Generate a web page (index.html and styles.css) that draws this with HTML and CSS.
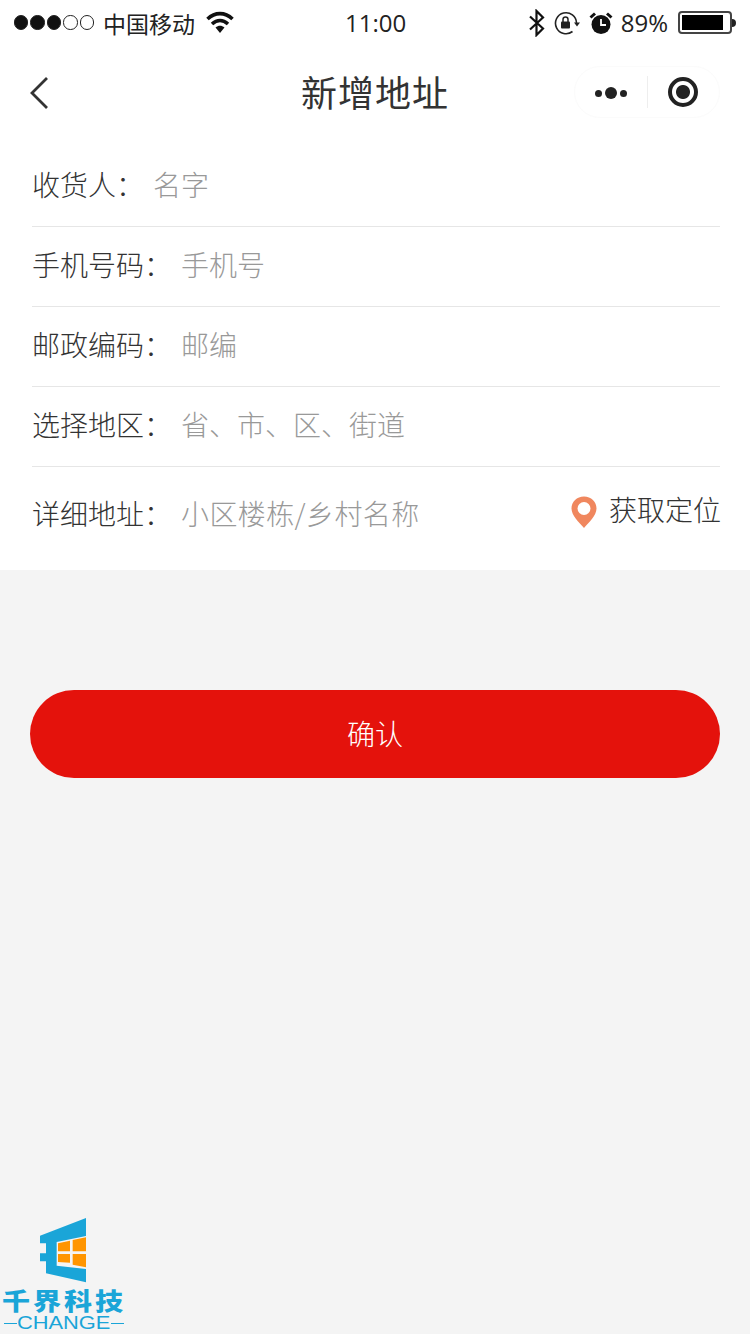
FILE: index.html
```html
<!DOCTYPE html>
<html lang="zh-CN">
<head>
    <meta charset="UTF-8">
    <meta name="viewport" content="width=device-width, initial-scale=1.0">
    <title>新增地址</title>
    <link rel="stylesheet" href="styles.css">
</head>
<body>

<div class="page">
    <div class="status-bar">
        <div class="status-left">
            <div class="signal">
                <span class="dot on"></span><span class="dot on"></span><span class="dot on"></span><span class="dot"></span><span class="dot"></span>
            </div>
            <span class="carrier">中国移动</span>
            <svg class="wifi" width="28" height="24" viewBox="0 0 28 24">
                <path d="M1.500 8C9 0.800 19 0.800 26.500 8" fill="none" stroke="#111" stroke-width="3.600"/>
                <path d="M6 13C11 8.500 17 8.500 22 13" fill="none" stroke="#111" stroke-width="3.600"/>
                <path d="M9.500 16.500C12.500 14 15.500 14 18.500 16.500L14 22Z" fill="#111"/>
            </svg>
        </div>
        <span class="clock">11:00</span>
        <div class="status-right">
            <svg width="20" height="28" viewBox="0 0 20 28">
                <path d="M3 7.500L16 19.500L9.500 26V2L16 8.500L3 20.500" fill="none" stroke="#111" stroke-width="2.200"/>
            </svg>
            <svg width="28" height="24" viewBox="0 0 28 24">
                <path d="M23.500 12A10.500 10.500 0 1 0 19.500 20.500" fill="none" stroke="#222" stroke-width="1.600"/>
                <path d="M21 11.500H27L24 15.500Z" fill="#222"/>
                <rect x="8" y="10.500" width="9" height="7" rx="1" fill="#222"/>
                <path d="M10 11V8.500A2.500 2.500 0 0 1 15 8.500V11" fill="none" stroke="#222" stroke-width="1.500"/>
            </svg>
            <svg class="alarm" width="24" height="24" viewBox="0 0 24 24">
                <circle cx="12" cy="13.500" r="9.500" fill="#111"/>
                <path d="M12 8V14H17" fill="none" stroke="#fff" stroke-width="1.800"/>
                <path d="M1.500 6.500L6 2.500M22.500 6.500L18 2.500" stroke="#111" stroke-width="3"/>
            </svg>
            <span class="percent">89%</span>
            <div class="battery">
                <div class="battery-body"><div class="battery-level"></div></div>
                <span class="battery-cap"></span>
            </div>
        </div>
    </div>

    <div class="nav-bar">
        <svg class="back" width="20" height="34" viewBox="0 0 20 34">
            <path d="M18 2L3 17L18 32" fill="none" stroke="#333" stroke-width="2.800"/>
        </svg>
        <h1 class="nav-title">新增地址</h1>
        <div class="capsule">
            <div class="capsule-more">
                <span class="more-dot"></span><span class="more-dot big"></span><span class="more-dot"></span>
            </div>
            <div class="capsule-line"></div>
            <div class="capsule-close"><span class="close-dot"></span></div>
        </div>
    </div>

    <div class="form">
        <div class="row">
            <span class="label">收货人：</span>
            <span class="hint">名字</span>
        </div>
        <div class="row">
            <span class="label">手机号码：</span>
            <span class="hint">手机号</span>
        </div>
        <div class="row">
            <span class="label">邮政编码：</span>
            <span class="hint">邮编</span>
        </div>
        <div class="row">
            <span class="label">选择地区：</span>
            <span class="hint">省、市、区、街道</span>
        </div>
        <div class="row last">
            <span class="label">详细地址：</span>
            <span class="hint">小区楼栋/乡村名称</span>
            <div class="locate">
                <svg width="26" height="32" viewBox="0 0 26 32">
                    <path d="M13 0.500C5.800 0.500 0.500 5.800 0.500 12.500C0.500 19.500 8 26.500 13 32C18 26.500 25.500 19.500 25.500 12.500C25.500 5.800 20.200 0.500 13 0.500Z" fill="#f0875e"/>
                    <circle cx="13" cy="12.500" r="6.500" fill="#fff"/>
                </svg>
                <span class="locate-text">获取定位</span>
            </div>
        </div>
    </div>

    <div class="actions">
        <button class="confirm">确认</button>
    </div>

    <div class="logo">
        <svg width="54" height="72" viewBox="0 0 162 216">
            <path d="M150 12V66L62 84V155L150 165V205L30 178V142H12V118H30V88H12V65Z" fill="#1aa5d8"/>
            <path d="M66 88L102 80V112H66ZM110 78L150 70V112H110ZM66 120H102V146L66 144ZM110 120H150V160L110 152Z" fill="#ff9500"/>
        </svg>
        <div class="logo-name">千界科技</div>
        <div class="logo-sub"><span class="logo-dash"></span><span class="logo-word">CHANGE</span><span class="logo-dash"></span></div>
    </div>
</div>

</body>
</html>
```

FILE: styles.css
```css
* {
    margin: 0;
    padding: 0;
    box-sizing: border-box;
}

body {
    font-family: 'Noto Sans CJK SC', 'Noto Sans', sans-serif;
    background: #f4f4f4;
    color: #333;
}

.page {
    position: relative;
    width: 750px;
    height: 1334px;
    overflow: hidden;
}

/* status bar */
.status-bar {
    height: 48px;
    background: #fff;
    display: flex;
    align-items: center;
    justify-content: space-between;
    position: relative;
    padding: 0 14px 3px;
    font-size: 24px;
    color: #222;
}

.status-left,
.status-right {
    display: flex;
    align-items: center;
}

.signal {
    display: flex;
    gap: 2px;
}

.dot {
    width: 14.400px;
    height: 14.400px;
    border-radius: 50%;
    border: 1.5px solid #222;
}

.dot.on {
    background: #111;
}

.carrier {
    margin-left: 9px;
    font-size: 23px;
    line-height: 40px;
}

.wifi {
    margin-left: 11px;
}

.clock {
    position: absolute;
    left: 345px;
    top: 0;
    line-height: 46px;
    font-family: 'Open Sans', sans-serif;
}

.status-right {
    gap: 6px;
}

.alarm {
    margin-left: 2px;
}

.percent {
    font-family: 'Open Sans', sans-serif;
    margin-left: 2px;
}

.battery {
    display: flex;
    align-items: center;
    margin-left: 4px;
}

.battery-body {
    width: 54px;
    height: 23px;
    border: 2px solid #444;
    border-radius: 4px;
    padding: 2px;
}

.battery-level {
    width: 41px;
    height: 100%;
    background: #000;
}

.battery-cap {
    width: 4px;
    height: 8px;
    background: #222;
    border-radius: 0 4px 4px 0;
}

/* nav */
.nav-bar {
    height: 90px;
    background: #fff;
    display: flex;
    align-items: center;
    justify-content: center;
    position: relative;
    padding-bottom: 4px;
}

.back {
    position: absolute;
    left: 29px;
    top: 28px;
}

.nav-title {
    font-size: 36px;
    font-weight: 400;
    letter-spacing: 1px;
    color: #333;
}

.capsule {
    position: absolute;
    left: 574px;
    top: 18px;
    width: 146px;
    height: 52px;
    border-radius: 26px;
    border: 1px solid #fbfbfb;
    display: flex;
    align-items: center;
}

.capsule-more {
    width: 72px;
    display: flex;
    align-items: center;
    justify-content: center;
    gap: 3px;
    padding-top: 2px;
}

.more-dot {
    width: 7px;
    height: 7px;
    border-radius: 50%;
    background: #222;
}

.more-dot.big {
    width: 12px;
    height: 12px;
}

.capsule-line {
    width: 1px;
    height: 32px;
    background: #eee;
}

.capsule-close {
    flex: 1;
    display: flex;
    align-items: center;
    justify-content: center;
    padding-right: 2px;
}

.close-dot {
    width: 30px;
    height: 30px;
    border-radius: 50%;
    border: 4px solid #222;
    background: radial-gradient(circle, #222 0, #222 6.500px, #fff 7.500px);
}

/* form */
.form {
    background: #fff;
    height: 432px;
    padding: 9px 30px 0 32px;
}

.row {
    height: 80px;
    display: flex;
    align-items: center;
    border-bottom: 1px solid #e6e6e6;
    padding-bottom: 6px;
    font-size: 28px;
}

.row.last {
    height: 103px;
    border-bottom: 0;
    padding-bottom: 12px;
}

.row.last .hint {
    letter-spacing: 0.400px;
}

.label {
    margin-right: 9px;
    color: #333;
    font-weight: 300;
}

.hint {
    color: #999;
    font-weight: 300;
}

.locate {
    margin-left: auto;
    margin-right: -1px;
    display: flex;
    align-items: center;
    gap: 12px;
    color: #333;
    font-weight: 300;
    position: relative;
    top: -1px;
}

.locate-text {
    margin-bottom: 5px;
}

/* button */
.actions {
    padding: 120px 30px 0;
}

.confirm {
    display: block;
    width: 100%;
    height: 88px;
    border: 0;
    border-radius: 44px;
    background: #e4120c;
    color: #fff;
    font-family: inherit;
    font-size: 28px;
    font-weight: 300;
    padding-bottom: 2px;
}

/* watermark */
.logo {
    position: absolute;
    left: 3px;
    top: 1214px;
    width: 122px;
    display: flex;
    flex-direction: column;
    align-items: center;
    color: #1aa5d8;
}

.logo svg {
    display: block;
    margin-right: 2px;
}

.logo-name {
    font-size: 28px;
    line-height: 28px;
    font-weight: 900;
    letter-spacing: 3px;
    white-space: nowrap;
    transform: scaleY(0.850);
}

.logo-sub {
    display: flex;
    align-items: center;
    justify-content: space-between;
    width: 120px;
    margin-top: 1px;
    font-family: 'Liberation Sans', sans-serif;
    font-size: 19px;
    line-height: 16px;
}

.logo-word {
    transform: scaleX(1.150);
}

.logo-dash {
    width: 13px;
    height: 1px;
    background: #1aa5d8;
}
```
